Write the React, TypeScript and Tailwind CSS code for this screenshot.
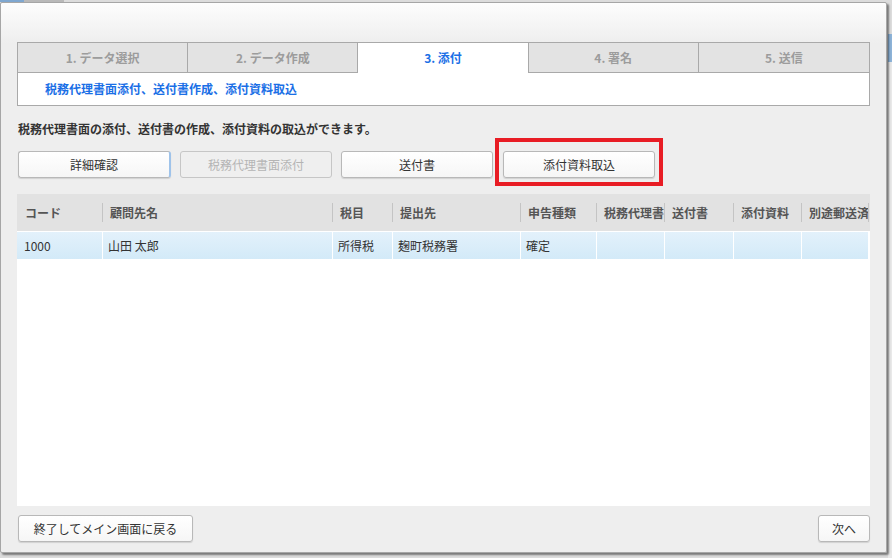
import React from "react";

const font = "font-['Meiryo','Noto_Sans_CJK_JP','Noto_Sans',sans-serif]";

function Btn({
  children,
  className = "",
  disabled = false,
}: {
  children: React.ReactNode;
  className?: string;
  disabled?: boolean;
}) {
  return (
    <button
      className={
        "flex h-[27px] items-center justify-center rounded-[3px] border text-[12px] leading-none " +
        (disabled
          ? "border-[#c6c6c6] bg-[#efefef] text-[#b4b4b4] "
          : "border-[#b8b8b8] bg-[linear-gradient(to_bottom,#ffffff,#f6f6f6)] text-[#333333] shadow-[0_1px_1px_rgba(0,0,0,0.12)] ") +
        className
      }
    >
      {children}
    </button>
  );
}

const tabs = ["1. データ選択", "2. データ作成", "3. 添付", "4. 署名", "5. 送信"];

const cols: { label: string; w: number; cell: string }[] = [
  { label: "コード", w: 85, cell: "1000" },
  { label: "顧問先名", w: 230, cell: "山田 太郎" },
  { label: "税目", w: 60, cell: "所得税" },
  { label: "提出先", w: 128, cell: "麹町税務署" },
  { label: "申告種類", w: 76, cell: "確定" },
  { label: "税務代理書面", w: 68, cell: "" },
  { label: "送付書", w: 69, cell: "" },
  { label: "添付資料", w: 68, cell: "" },
  { label: "別途郵送済", w: 67, cell: "" },
];

export default function App() {
  return (
    <div className={"relative h-[558px] w-[892px] overflow-hidden bg-[#dcdcdc] " + font}>
      {/* background page hints */}
      <div className="absolute left-0 top-0 h-[2px] w-[24px] bg-[#7fa7d0]" />
      <div className="absolute left-[24px] top-0 h-[2px] w-[40px] bg-[#b9b9b9]" />
      <div className="absolute right-0 top-[34px] h-[28px] w-[4px] bg-[#8db3d8]" />
      <div className="absolute right-0 top-[62px] h-[496px] w-[4px] bg-[#e9e9e9]" />

      {/* dialog window */}
      <div className="absolute left-0 top-[2px] flex h-[551px] w-[887px] flex-col rounded-[2px] border border-[#a6a6a6] bg-[linear-gradient(to_bottom,#fdfdfd_0px,#eeeeee_40px,#eeeeee_100%)] px-[16px] pt-[39px] shadow-[2px_2px_2px_rgba(0,0,0,0.45)]">
        {/* tabs */}
        <div className="flex h-[64px] flex-col border border-[#a9a9a9] bg-white">
          <div className="grid h-[30px] grid-cols-5">
            {tabs.map((t, i) => {
              const active = i === 2;
              return (
                <div
                  key={t}
                  className={
                    "flex items-center justify-center text-[12px] font-bold leading-none " +
                    (i < 4 ? "border-r border-[#a9a9a9] " : "") +
                    (active
                      ? "bg-white text-[#1a6fe6]"
                      : "border-b border-b-[#a9a9a9] bg-[#e3e3e3] text-[#9c9c9c]")
                  }
                >
                  {t}
                </div>
              );
            })}
          </div>
          <div className="flex flex-1 items-center pl-[27px] text-[12px] font-bold leading-none text-[#1a6fe6]">
            税務代理書面添付、送付書作成、添付資料取込
          </div>
        </div>

        {/* description */}
        <div className="mt-[15px] pl-px text-[12px] font-bold leading-[16px] text-[#333333]">
          税務代理書面の添付、送付書の作成、添付資料の取込ができます。
        </div>

        {/* buttons */}
        <div className="mt-[14px] flex pl-px">
          <Btn className="w-[153px] border-r-2 border-r-[#9fc3ea]">詳細確認</Btn>
          <Btn className="ml-[9px] w-[152px]" disabled>
            税務代理書面添付
          </Btn>
          <Btn className="ml-[9px] w-[152px]">送付書</Btn>
          <div className="relative ml-[10px]">
            <Btn className="w-[152px]">添付資料取込</Btn>
            <div className="pointer-events-none absolute left-[-8px] top-[-13px] h-[48px] w-[168px] border-[4px] border-[#e81c24]" />
          </div>
        </div>

        {/* table */}
        <div className="mt-[16px] flex h-[312px] flex-col bg-white">
          <div className="flex h-[37px] bg-[#e2e2e2]">
            {cols.map((c, i) => (
              <div
                key={c.label}
                style={{ width: c.w }}
                className="relative flex shrink-0 items-center overflow-hidden whitespace-nowrap pl-[8px] text-[12px] font-bold leading-none text-[#555555]"
              >
                {i > 0 && (
                  <div className="absolute left-0 top-[9px] h-[19px] w-px bg-[#c4c4c4]" />
                )}
                {c.label}
              </div>
            ))}
            <div className="relative flex-1">
              <div className="absolute left-0 top-[9px] h-[19px] w-px bg-[#c4c4c4]" />
            </div>
          </div>
          <div className="mt-px flex h-[27px] bg-white">
            {cols.map((c, i) => (
              <div
                key={c.label}
                style={{ width: c.w }}
                className={
                  "flex shrink-0 items-center overflow-hidden whitespace-nowrap bg-[linear-gradient(to_bottom,#e3f1fb,#d3eaf8)] text-[12px] leading-none text-[#333333] " +
                  (i > 0 ? "border-l border-white pl-[5px]" : "pl-[7px]")
                }
              >
                {c.cell}
              </div>
            ))}
          </div>
        </div>

        {/* footer */}
        <div className="mt-[9px] flex justify-between pl-px">
          <Btn className="h-[26px] w-[175px]">終了してメイン画面に戻る</Btn>
          <Btn className="h-[26px] w-[52px]">次へ</Btn>
        </div>
      </div>
    </div>
  );
}
